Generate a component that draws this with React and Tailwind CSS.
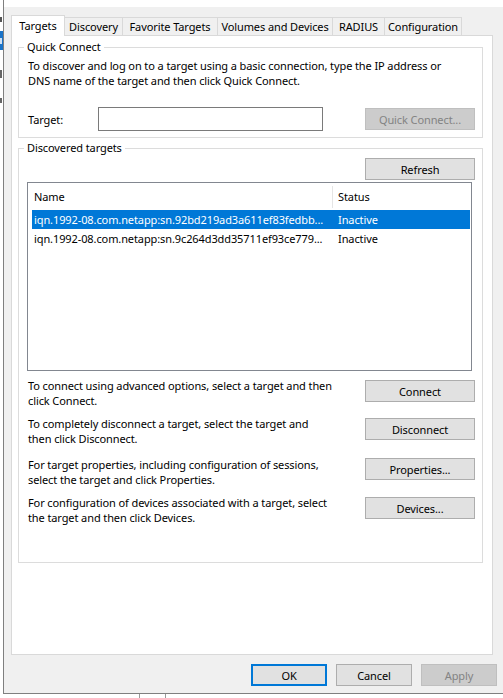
import clsx from 'clsx'

// iSCSI Initiator Properties – Targets page

const tabs = [
	{ label: 'Targets', w: 'w-[54px]', active: true },
	{ label: 'Discovery', w: 'w-[59px]' },
	{ label: 'Favorite Targets', w: 'w-[96px]' },
	{ label: 'Volumes and Devices', w: 'w-[116px]' },
	{ label: 'RADIUS', w: 'w-[53px]' },
	{ label: 'Configuration', w: 'w-[78px]' },
]

const targets = [
	{ name: 'iqn.1992-08.com.netapp:sn.92bd219ad3a611ef83fedbb...', status: 'Inactive', selected: true },
	{ name: 'iqn.1992-08.com.netapp:sn.9c264d3dd35711ef93ce779...', status: 'Inactive' },
]

const actions = [
	{ lines: ['To connect using advanced options, select a target and then', 'click Connect.'], button: 'Connect', row: 'mt-[7px]', btn: 'mt-[2px]' },
	{ lines: ['To completely disconnect a target, select the target and', 'then click Disconnect.'], button: 'Disconnect', row: 'mt-[8px]', btn: 'mt-[2px]' },
	{ lines: ['For target properties, including configuration of sessions,', 'select the target and click Properties.'], button: 'Properties...', row: 'mt-[11px]', btn: 'mt-[1px]' },
	{ lines: ['For configuration of devices associated with a target, select', 'the target and then click Devices.'], button: 'Devices...', row: 'mt-[8px]', btn: 'mt-[2px]' },
]

function Button({ children, disabled, primary, className }) {
	return (
		<div
			className={clsx(
				'flex h-[22px] items-center justify-center leading-[15px]',
				disabled && 'border border-[#bfbfbf] bg-[#cccccc] text-[#838383]',
				primary && 'border-2 border-[#0078d7] bg-[#e1e1e1] text-black',
				!disabled && !primary && 'border border-[#adadad] bg-[#e1e1e1] text-black',
				className
			)}
		>
			{children}
		</div>
	)
}

function Group({ title, className, children }) {
	return (
		<fieldset className={clsx('min-w-0 border border-[#dcdcdc] p-0', className)}>
			<legend className="ml-[5px] px-[3px] leading-[16px]">{title}</legend>
			{children}
		</fieldset>
	)
}

export default function App() {
	return (
		<div className="flex h-[698px] w-[503px] flex-col overflow-hidden bg-white font-['Noto_Sans',sans-serif] text-[11px] tracking-[-0.1px] text-black">
			<div className="flex h-[694px]">
				{/* edge of the window behind */}
				<div className="flex w-[3px] flex-col bg-white">
					<div className="mt-[17px] h-[5px] w-[2px] bg-[#555]" />
					<div className="mt-[9px] flex h-[19px] w-[3px] items-center bg-[#1a73c8]">
						<div className="h-[6px] w-[2px] bg-[#cfe1f5]" />
					</div>
					<div className="mt-[20px] h-[8px] w-[2px] bg-[#666]" />
					<div className="mt-[20px] h-[5px] w-[2px] bg-[#666]" />
				</div>

				<div className="flex flex-1 flex-col border-b border-l border-[#7f7f7f]">
					<div className="h-[7px] bg-white" />
					<div className="flex flex-1 flex-col bg-[#f0f0f0] pl-[7px]">
						{/* tab strip */}
						<div className="mt-[8px] flex h-[20px] items-start">
							{tabs.map(t => (
								<div
									key={t.label}
									className={clsx(
										'flex items-center justify-center whitespace-nowrap border-x border-t border-[#d9d9d9] leading-[16px]',
										t.w,
										t.active ? 'relative z-10 h-[21px] bg-white pb-[1px]' : '-ml-px mt-[2px] h-[18px] bg-[#f0f0f0]'
									)}
								>
									{t.label}
								</div>
							))}
						</div>

						{/* tab page */}
						<div className="flex h-[620px] w-[482px] flex-col border border-[#d9d9d9] bg-white pl-[6px] pr-[9px]">
							<Group title="Quick Connect" className="mt-[3px]">
								<div className="mt-[3px] whitespace-nowrap pl-[9px] leading-[15px]">
									<div>To discover and log on to a target using a basic connection, type the IP address or</div>
									<div>DNS name of the target and then click Quick Connect.</div>
								</div>
								<div className="mt-[19px] flex h-[24px] items-center pl-[9px] pr-[7px]">
									<div className="w-[70px] leading-[15px]">Target:</div>
									<div className="h-[24px] w-[225px] border border-[#7a7a7a] bg-white" />
									<Button disabled className="ml-auto w-[110px]">Quick Connect...</Button>
								</div>
								<div className="h-[6px]" />
							</Group>

							<Group title="Discovered targets" className="mt-[2px]">
								<div className="flex flex-col pl-[8px] pr-[7px]">
									<Button className="mt-[2px] w-[110px] self-end">Refresh</Button>

									{/* target list */}
									<div className="mt-[2px] flex h-[189px] w-[445px] flex-col border border-[#828790] bg-white">
										<div className="flex h-[27px] items-end pb-[4px] leading-[16px]">
											<div className="mb-[-2px] flex h-[22px] w-[305px] items-center border-r border-[#e5e5e5] pl-[6px]">Name</div>
											<div className="mb-[-2px] flex h-[22px] items-center pl-[5px]">Status</div>
										</div>
										{targets.map(r => (
											<div
												key={r.name}
												className={clsx(
													'ml-[4px] mr-px flex h-[19px] items-center leading-[16px]',
													r.selected ? 'bg-[#0078d7] text-white' : 'text-black'
												)}
											>
												<div className="w-[301px] overflow-hidden whitespace-nowrap pl-[2px]">{r.name}</div>
												<div className="pl-[5px]">{r.status}</div>
											</div>
										))}
									</div>
								</div>

								{actions.map(a => (
									<div key={a.button} className={clsx('flex items-start pl-[9px] pr-[7px]', a.row)}>
										<div className="leading-[15px]">
											{a.lines.map(l => (
												<div key={l} className="whitespace-nowrap">{l}</div>
											))}
										</div>
										<Button className={clsx('ml-auto w-[110px] shrink-0', a.btn)}>{a.button}</Button>
									</div>
								))}
								<div className="h-[37px]" />
							</Group>
						</div>

						{/* dialog buttons */}
						<div className="mt-[9px] flex justify-end gap-[9px] pr-[6px]">
							<Button primary className="w-[76px]">OK</Button>
							<Button className="w-[76px]">Cancel</Button>
							<Button disabled className="w-[76px]">Apply</Button>
						</div>
					</div>
				</div>
			</div>

			<div className="flex h-[4px]">
				<div className="ml-[139px] h-full w-[27px] border-x border-[#9a9a9a]" />
			</div>
		</div>
	)
}
